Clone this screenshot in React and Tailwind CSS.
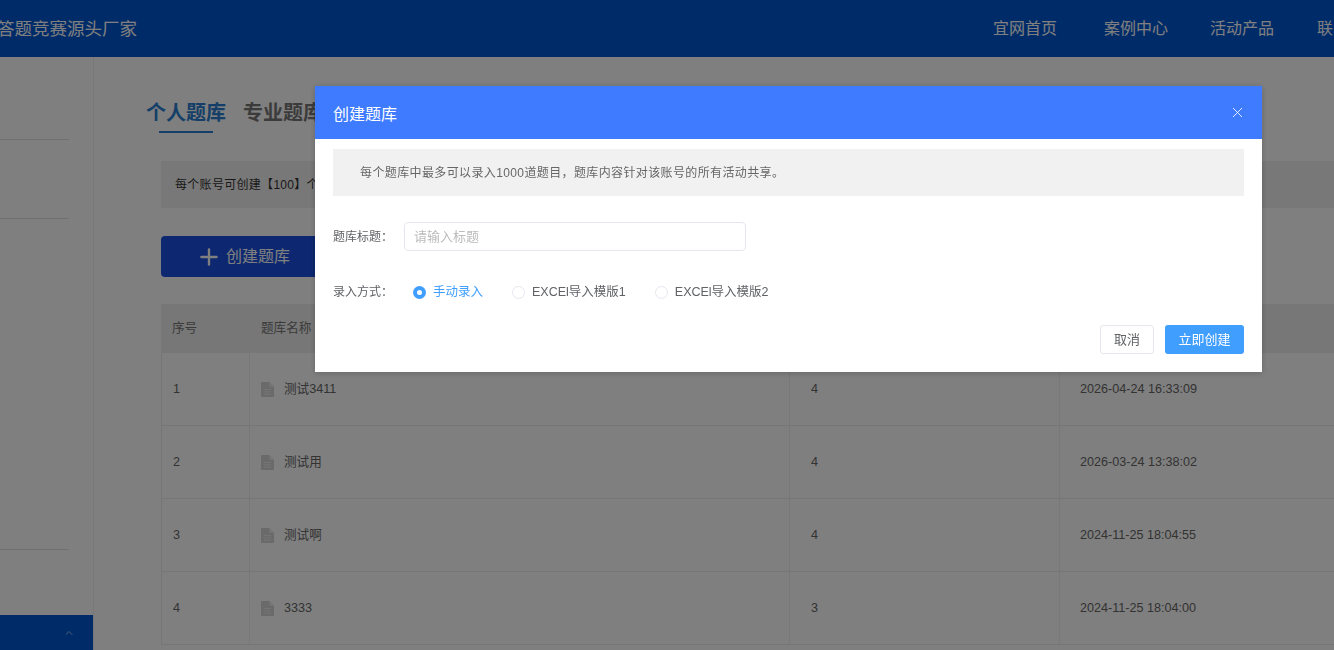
import { ChevronUp, Plus, X } from "lucide-react";

const font = { fontFamily: '"Liberation Sans", "Noto Sans CJK SC", sans-serif' };

const rows = [
  { no: 1, name: "测试3411", count: 4, time: "2026-04-24 16:33:09" },
  { no: 2, name: "测试用", count: 4, time: "2026-03-24 13:38:02" },
  { no: 3, name: "测试啊", count: 4, time: "2024-11-25 18:04:55" },
  { no: 4, name: "3333", count: 3, time: "2024-11-25 18:04:00" },
];

const DocIcon = () => (
  <svg width="13" height="15" viewBox="0 0 14 16" className="shrink-0">
    <path d="M1 0h8l5 5v10a1 1 0 0 1-1 1H1a1 1 0 0 1-1-1V1a1 1 0 0 1 1-1z" fill="#d4d4d4" />
    <path d="M9 0l5 5H9z" fill="#ececec" />
    <path d="M3 8h8M3 10.5h8M3 13h8" stroke="#ececec" strokeWidth="1" />
  </svg>
);

const Radio = ({ label, active }) => (
  <label className={`flex items-center gap-[7px] text-[12.5px] ${active ? "text-[#409eff]" : "text-[#606266]"}`}>
    {active ? (
      <span className="w-[13px] h-[13px] rounded-full bg-[#409eff] flex items-center justify-center">
        <span className="w-[5px] h-[5px] rounded-full bg-white" />
      </span>
    ) : (
      <span className="w-[13px] h-[13px] rounded-full border border-[#e4e7ed] bg-white" />
    )}
    {label}
  </label>
);

const Sidebar = () => (
  <aside className="w-[94px] shrink-0 h-[593px] border-r border-[#f0f0f0] flex flex-col">
    <div className="w-[69px] h-px bg-[#e0e0e0] mt-[82px]" />
    <div className="w-[69px] h-px bg-[#e0e0e0] mt-[78px]" />
    <div className="w-[69px] h-px bg-[#e0e0e0] mt-[330px]" />
    <div className="mt-auto h-[35px] bg-[#0056d2] flex items-center justify-end pr-[18px]">
      <ChevronUp className="w-3 h-3 text-white opacity-60" />
    </div>
  </aside>
);

const Table = () => (
  <div className="w-[1300px] text-[12.6px] text-[#666]">
    <div className="grid grid-cols-[89px_540px_270px_1fr] h-[49px] bg-[#eeeeee] items-center text-[#777]">
      <div className="pl-[11px]">序号</div>
      <div className="pl-[11px]">题库名称</div>
      <div className="pl-[20px]">题目数量</div>
      <div className="pl-[20px]">创建时间</div>
    </div>
    {rows.map((row) => (
      <div
        key={row.no}
        className="grid grid-cols-[88px_540px_270px_1fr] h-[73px] border-b border-l border-[#ececec] items-stretch"
      >
        <div className="pl-[11px] flex items-center border-r border-[#f0f0f0]">{row.no}</div>
        <div className="pl-[11px] flex items-center gap-[10px] border-r border-[#f0f0f0]">
          <DocIcon />
          {row.name}
        </div>
        <div className="pl-[21px] flex items-center border-r border-[#f0f0f0]">{row.count}</div>
        <div className="pl-[20px] flex items-center">{row.time}</div>
      </div>
    ))}
  </div>
);

const Dialog = () => (
  <div className="fixed left-[315px] top-[86px] w-[947px] h-[286px] bg-white shadow-[0_1px_6px_rgba(0,0,0,0.2)]">
    <div className="h-[53px] bg-[#3e7bff] flex items-center justify-between pl-[18px] pr-[16px]">
      <span className="text-[16px] text-white pt-[4px]">创建题库</span>
      <X className="w-[17px] h-[17px] text-white" strokeWidth={1.2} />
    </div>
    <div className="px-[18px] pt-[10px]">
      <div className="h-[47px] bg-[#f1f1f1] flex items-center pl-[27px] text-[12px] tracking-[0.38px] text-[#666]">
        每个题库中最多可以录入1000道题目，题库内容针对该账号的所有活动共享。
      </div>
      <div className="flex items-center mt-[26px]">
        <span className="w-[71px] text-[12px] text-[#606266] pt-px">题库标题：</span>
        <div className="w-[342px] h-[29px] border border-[#e4e7ed] rounded-[4px] flex items-center pl-[9px] text-[13px] text-[#bbbbbb]">
          请输入标题
        </div>
      </div>
      <div className="flex items-center mt-[31px] h-[20px]">
        <span className="w-[80px] text-[12px] text-[#606266]">录入方式：</span>
        <div className="flex items-center gap-[29px]">
          <Radio label="手动录入" active />
          <Radio label="EXCEl导入模版1" />
          <Radio label="EXCEl导入模版2" />
        </div>
      </div>
      <div className="flex justify-end gap-[11px] mt-[23px]">
        <button className="w-[54px] h-[29px] border border-[#e4e7ed] rounded-[3px] text-[13px] text-[#606266] bg-white">
          取消
        </button>
        <button className="w-[79px] h-[29px] rounded-[3px] text-[13px] text-white bg-[#409eff]">
          立即创建
        </button>
      </div>
    </div>
  </div>
);

export default function App() {
  return (
    <div className="w-[1334px] h-[650px] overflow-hidden bg-white" style={font}>
      <header className="h-[57px] bg-[#0056d2] flex items-center justify-between whitespace-nowrap text-white pt-px">
        <div className="text-[17.5px] -ml-[3px]">答题竞赛源头厂家</div>
        <nav className="flex text-[16px] -mr-[47px]">
          <span>宜网首页</span>
          <span className="ml-[47px]">案例中心</span>
          <span className="ml-[42px]">活动产品</span>
          <span className="ml-[43px]">联系我们</span>
        </nav>
      </header>
      <div className="flex">
        <Sidebar />
        <main className="pl-[53px] pt-[42px] w-[1240px] shrink-0">
          <div className="-ml-px flex gap-[17px] text-[20px] font-bold leading-[28px]">
            <span className="text-[#2a7fd0]">个人题库</span>
            <span className="text-[#777]">专业题库</span>
          </div>
          <div className="ml-[12px] mt-[4px] w-[54px] h-[2px] bg-[#2a7fd0]" />
          <div className="ml-[14px] mt-[28px]">
            <div className="w-[1300px] h-[47px] bg-[#f0f0f0] flex items-center pl-[14px] text-[12px] tracking-[0.3px] text-[#333]">
              每个账号可创建【100】个题库
            </div>
            <button className="mt-[28px] w-[164px] h-[41px] rounded-[4px] bg-[#1a50e0] text-white text-[16px] flex items-center justify-center gap-[4px]">
              <Plus className="w-[26px] h-[26px]" strokeWidth={2.2} />
              创建题库
            </button>
            <div className="mt-[27px]">
              <Table />
            </div>
          </div>
        </main>
      </div>
      <div className="fixed inset-0 bg-black/50" />
      <Dialog />
    </div>
  );
}
